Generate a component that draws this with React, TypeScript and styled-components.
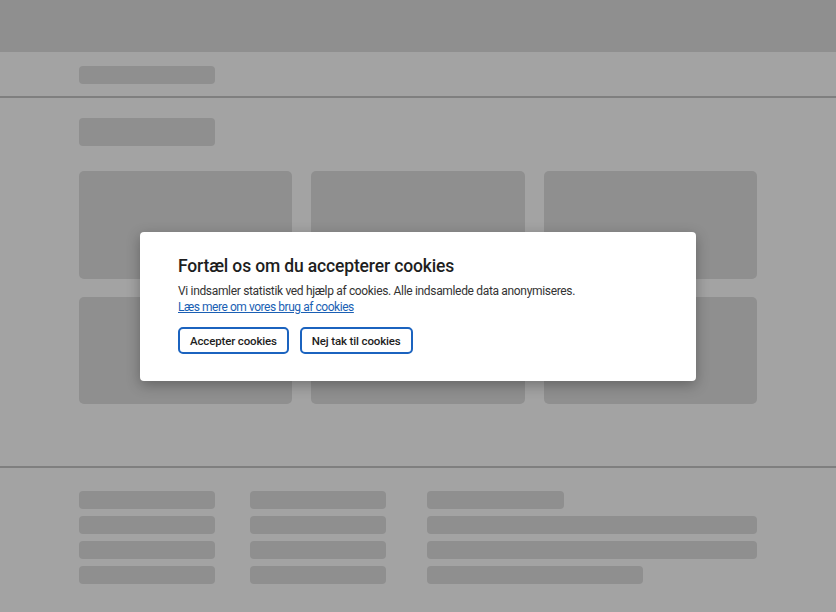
import React from "react";
import styled, { createGlobalStyle } from "styled-components";

const Global = createGlobalStyle`
  html, body { margin: 0; padding: 0; }
  body { background: #a3a3a3; font-family: Roboto, "Liberation Sans", sans-serif; }
  * { box-sizing: border-box; }
`;

const Page = styled.div`
  position: relative;
  width: 836px;
  height: 612px;
  overflow: hidden;
  background: #a3a3a3;
`;

const TopBar = styled.div`
  height: 52px;
  background: #8f8f8f;
`;

const Container = styled.div`
  width: 678px;
  margin: 0 auto;
`;

const Nav = styled.div`
  height: 46px;
  padding-top: 14px;
  border-bottom: 2px solid #7f7f7f;
`;

const Bar = styled.div<{ $w?: string; $h?: number }>`
  width: ${(p) => p.$w ?? "136px"};
  height: ${(p) => p.$h ?? 18}px;
  background: #8f8f8f;
  border-radius: 4px;
`;

const Main = styled.div`
  padding: 20px 0 62px;
  display: flex;
  flex-direction: column;
  gap: 25px;
`;

const Cards = styled.div`
  display: grid;
  grid-template-columns: repeat(3, 1fr);
  grid-auto-rows: 107.5px;
  gap: 18px 19px;
`;

const Card = styled.div`
  background: #8f8f8f;
  border-radius: 5px;
`;

const Footer = styled.div`
  border-top: 2px solid #7f7f7f;
  padding-top: 23px;
`;

const FooterCols = styled.div`
  display: flex;
`;

const FooterCol = styled.div<{ $w?: string; $mr?: number }>`
  display: flex;
  flex-direction: column;
  gap: 7px;
  width: ${(p) => p.$w ?? "auto"};
  flex: ${(p) => (p.$w ? "none" : "1")};
  margin-right: ${(p) => p.$mr ?? 0}px;
`;

const Modal = styled.div`
  position: absolute;
  left: 140px;
  top: 232px;
  width: 556px;
  height: 149px;
  background: #fff;
  border-radius: 4px;
  box-shadow: 0 4px 14px rgba(0, 0, 0, 0.3);
  padding: 22px 38px 0;
`;

const Title = styled.h2`
  margin: 0 0 5px;
  font-size: 17.5px;
  line-height: 24px;
  font-weight: 500;
  letter-spacing: -0.15px;
  color: #1e1e1e;
`;

const Text = styled.p`
  margin: 0;
  font-size: 12px;
  line-height: 16px;
  letter-spacing: -0.33px;
  color: #333;
`;

const Link = styled.a`
  display: block;
  width: max-content;
  font-size: 12px;
  line-height: 16px;
  letter-spacing: -0.45px;
  color: #1a5fb4;
  text-decoration: underline;
`;

const Actions = styled.div`
  display: flex;
  gap: 11px;
  margin-top: 12px;
`;

const Button = styled.button`
  height: 27px;
  padding: 0 10px;
  background: #fff;
  border: 2px solid #1b63bf;
  border-radius: 5px;
  font-family: inherit;
  font-size: 11.5px;
  font-weight: 500;
  letter-spacing: -0.15px;
  color: #1e1e1e;
  cursor: pointer;
`;

export default function App() {
  return (
    <Page>
      <Global />
      <TopBar />
      <Nav>
        <Container>
          <Bar />
        </Container>
      </Nav>
      <Container>
        <Main>
          <Bar $h={28} />
          <Cards>
            <Card />
            <Card />
            <Card />
            <Card />
            <Card />
            <Card />
          </Cards>
        </Main>
      </Container>
      <Footer>
        <Container>
          <FooterCols>
            <FooterCol $w="136px" $mr={35}>
              <Bar />
              <Bar />
              <Bar />
              <Bar />
            </FooterCol>
            <FooterCol $w="136px" $mr={41}>
              <Bar />
              <Bar />
              <Bar />
              <Bar />
            </FooterCol>
            <FooterCol>
              <Bar $w="137px" />
              <Bar $w="100%" />
              <Bar $w="100%" />
              <Bar $w="216px" />
            </FooterCol>
          </FooterCols>
        </Container>
      </Footer>
      <Modal role="dialog">
        <Title>Fortæl os om du accepterer cookies</Title>
        <Text>Vi indsamler statistik ved hjælp af cookies. Alle indsamlede data anonymiseres.</Text>
        <Link href="#">Læs mere om vores brug af cookies</Link>
        <Actions>
          <Button>Accepter cookies</Button>
          <Button>Nej tak til cookies</Button>
        </Actions>
      </Modal>
    </Page>
  );
}
